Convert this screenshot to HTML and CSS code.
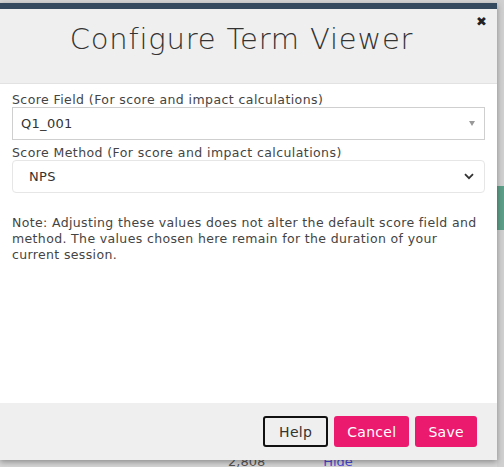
FILE: index.html
```html
<!DOCTYPE html>
<html>
<head>
<meta charset="utf-8">
<link rel="stylesheet" href="styles.css">
</head>
<body>
<div class="page">
  <div class="bg-row"><span class="bg-num">2,808</span><span class="bg-link">Hide</span></div>
  <div class="side-strip">
    <div class="side-tab"></div>
  </div>
</div>
<div class="modal">
  <div class="modal-header">
    <h1 class="modal-title">Configure Term Viewer</h1>
    <span class="close">&#x2716;</span>
  </div>
  <div class="modal-body">
    <label class="field-label">Score Field (For score and impact calculations)</label>
    <div class="select select-plain">
      <span>Q1_001</span>
      <span class="tri"></span>
    </div>
    <label class="field-label">Score Method (For score and impact calculations)</label>
    <div class="select select-round">
      <span>NPS</span>
      <svg class="chev" width="10" height="7" viewBox="0 0 10 7"><path d="M1 1.2 L5 5.2 L9 1.2" fill="none" stroke="#333" stroke-width="1.8"/></svg>
    </div>
    <p class="note">Note: Adjusting these values does not alter the default score field and method. The values chosen here remain for the duration of your current session.</p>
  </div>
  <div class="modal-footer">
    <button class="btn btn-help">Help</button>
    <button class="btn btn-pink">Cancel</button>
    <button class="btn btn-pink">Save</button>
  </div>
</div>
</body>
</html>
```
FILE: styles.css
```css
html, body {
  margin: 0;
  padding: 0;
}
body {
  width: 504px;
  height: 467px;
  overflow: hidden;
  background: #d6d6d6;
  font-family: "DejaVu Sans", sans-serif;
  position: relative;
}
.page {
  height: 467px;
  position: relative;
}
.bg-row {
  position: absolute;
  left: 228px;
  top: 455px;
  display: flex;
  gap: 58px;
  font-size: 13px;
  line-height: 14px;
  color: #555;
}
.bg-link { color: #4a4ad8; }
.side-strip {
  position: absolute;
  right: 0;
  top: 0;
  width: 7px;
  height: 467px;
  background: #d0d0d0;
}
.side-tab {
  margin-top: 186px;
  height: 44px;
  background: #5c9e88;
}
.modal {
  position: absolute;
  left: 0;
  top: 3px;
  width: 497px;
  height: 457px;
  background: #fff;
  border-top: 6px solid #34495e;
  box-shadow: 0 2px 6px rgba(0,0,0,0.35);
  display: flex;
  flex-direction: column;
  box-sizing: border-box;
}
.modal-header {
  background: #efefef;
  height: 74px;
  border-bottom: 1px solid #e2e2e2;
  position: relative;
  display: flex;
  justify-content: center;
}
.modal-title {
  margin: 13px 14px 0 0;
  font-family: "DejaVu Sans", sans-serif;
  font-weight: 200;
  font-size: 29px;
  color: #333;
  letter-spacing: 0.8px;
}
.close {
  position: absolute;
  right: 10px;
  top: 5px;
  font-size: 13px;
  color: #222;
}
.modal-body {
  flex: 1;
  padding: 8px 12px 0;
}
.field-label {
  display: block;
  font-size: 12.5px;
  letter-spacing: 0.42px;
  color: #444;
  line-height: 15px;
}
.select {
  display: flex;
  align-items: center;
  justify-content: space-between;
  height: 33px;
  box-sizing: border-box;
  font-size: 13px;
  letter-spacing: 0.3px;
  color: #333;
}
.select-plain {
  border: 1px solid #cfcfcf;
  padding: 0 8px;
  margin-bottom: 5px;
}
.select-round {
  border: 1px solid #e6e6e6;
  border-radius: 4px;
  padding: 0 10px 0 16px;
}
.tri {
  width: 0;
  height: 0;
  border-left: 3.5px solid transparent;
  border-right: 3.5px solid transparent;
  border-top: 5px solid #999;
  margin-right: 1px;
}
.note {
  margin: 22px 0 0;
  font-size: 12.5px;
  letter-spacing: 0.36px;
  line-height: 16px;
  color: #444;
}
.modal-footer {
  background: #efefef;
  height: 57px;
  display: flex;
  justify-content: flex-end;
  align-items: center;
  gap: 6px;
  padding: 0 20px 0 0;
}
.btn {
  font-family: "DejaVu Sans", sans-serif;
  font-size: 14px;
  letter-spacing: 0.3px;
  height: 31px;
  border-radius: 3px;
  padding: 0 13px;
}
.btn-help {
  background: #efefef;
  color: #333;
  border: 2px solid #111;
  padding: 0 14px;
}
.btn-pink {
  background: #ec1a6e;
  color: #fff;
  border: none;
}
```
